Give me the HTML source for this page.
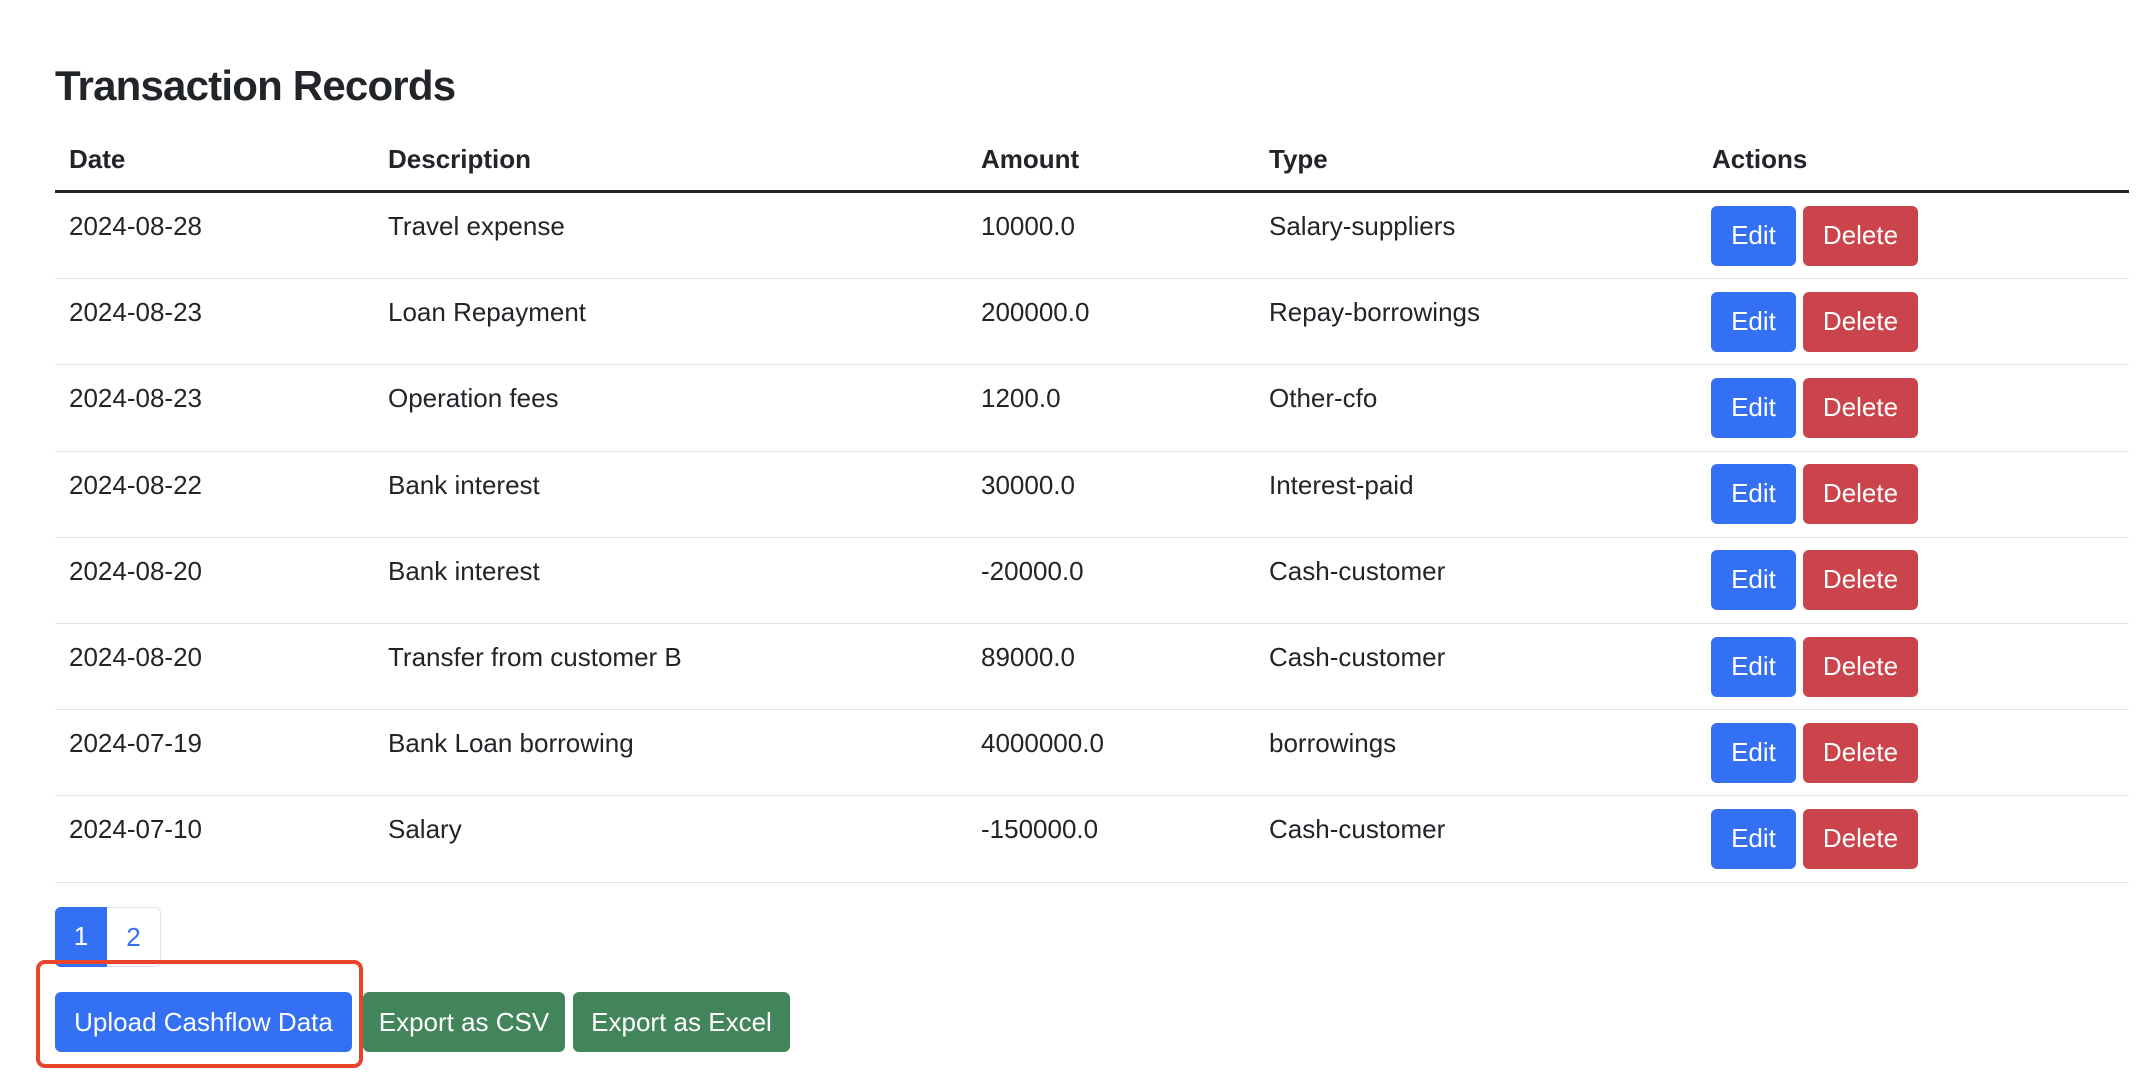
<!DOCTYPE html>
<html><head><meta charset="utf-8"><style>
*{box-sizing:border-box;margin:0;padding:0}
body{width:2154px;height:1078px;background:#fff;font-family:"Liberation Sans",sans-serif;color:#212529;position:relative;overflow:hidden}
h2{position:absolute;left:55px;top:60px;font-size:42px;font-weight:bold;line-height:52px;letter-spacing:-0.8px}
table{position:absolute;left:55px;top:126px;width:2074px;border-collapse:collapse;font-size:26px;table-layout:fixed}
th,td{text-align:left;vertical-align:top;padding:14px 14px 11px;line-height:39px}
th{font-weight:bold;height:65px}
thead tr{border-bottom:3px solid #212529}
tbody tr{border-bottom:1.5px solid #dee2e6}
td.a{padding:12.6px 13px}
.b{display:inline-block;height:60px;line-height:58px;padding:0 19px;color:#fff;border-radius:6px;font-size:26px;vertical-align:top}
.e{background:#3370f4;width:85px;text-align:center;padding:0;margin-right:7px}
.d{background:#cb444b;width:115px;text-align:center;padding:0}
.pg{position:absolute;top:907px;height:60px;line-height:58px;font-size:26px;text-align:center}
.btn2{position:absolute;top:992px;height:60px;line-height:60px;color:#fff;border-radius:6px;font-size:26px;text-align:center}
</style></head><body>
<h2>Transaction Records</h2>
<table>
<colgroup><col style="width:319px"><col style="width:593px"><col style="width:288px"><col style="width:443px"><col style="width:431px"></colgroup>
<thead><tr><th>Date</th><th>Description</th><th>Amount</th><th>Type</th><th>Actions</th></tr></thead>
<tbody>
<tr><td>2024-08-28</td><td>Travel expense</td><td>10000.0</td><td>Salary-suppliers</td><td class="a"><span class="b e">Edit</span><span class="b d">Delete</span></td></tr>
<tr><td>2024-08-23</td><td>Loan Repayment</td><td>200000.0</td><td>Repay-borrowings</td><td class="a"><span class="b e">Edit</span><span class="b d">Delete</span></td></tr>
<tr><td>2024-08-23</td><td>Operation fees</td><td>1200.0</td><td>Other-cfo</td><td class="a"><span class="b e">Edit</span><span class="b d">Delete</span></td></tr>
<tr><td>2024-08-22</td><td>Bank interest</td><td>30000.0</td><td>Interest-paid</td><td class="a"><span class="b e">Edit</span><span class="b d">Delete</span></td></tr>
<tr><td>2024-08-20</td><td>Bank interest</td><td>-20000.0</td><td>Cash-customer</td><td class="a"><span class="b e">Edit</span><span class="b d">Delete</span></td></tr>
<tr><td>2024-08-20</td><td>Transfer from customer B</td><td>89000.0</td><td>Cash-customer</td><td class="a"><span class="b e">Edit</span><span class="b d">Delete</span></td></tr>
<tr><td>2024-07-19</td><td>Bank Loan borrowing</td><td>4000000.0</td><td>borrowings</td><td class="a"><span class="b e">Edit</span><span class="b d">Delete</span></td></tr>
<tr><td>2024-07-10</td><td>Salary</td><td>-150000.0</td><td>Cash-customer</td><td class="a"><span class="b e">Edit</span><span class="b d">Delete</span></td></tr>
</tbody></table>
<div class="pg" style="left:55px;width:52px;background:#3370f4;color:#fff;border-radius:6px 0 0 6px">1</div>
<div class="pg" style="left:107px;width:54px;color:#3370f4;border:1.5px solid #dee2e6;border-left:none;border-radius:0 6px 6px 0">2</div>
<div style="position:absolute;left:36px;top:960px;width:327px;height:108px;border:4px solid #e8432b;border-radius:9px"></div>
<div class="btn2" style="left:55px;width:297px;background:#3370f4">Upload Cashflow Data</div>
<div class="btn2" style="left:363px;width:202px;background:#43855a">Export as CSV</div>
<div class="btn2" style="left:573px;width:217px;background:#43855a">Export as Excel</div>
</body></html>
